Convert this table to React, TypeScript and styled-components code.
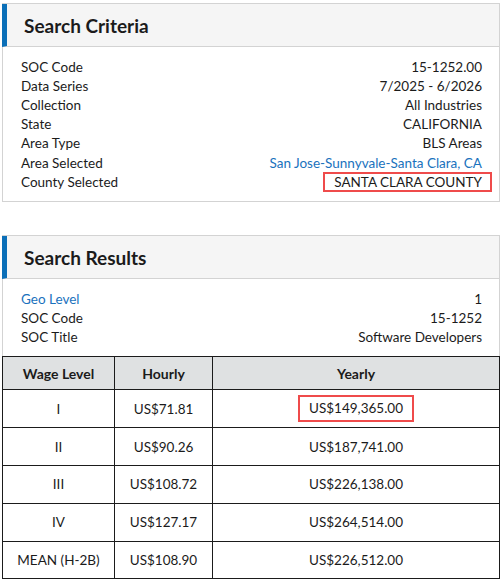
import React from "react";
import styled, { createGlobalStyle } from "styled-components";

const Global = createGlobalStyle`
  html, body { margin: 0; padding: 0; background: #fff; }
  body { font-family: "Source Sans Pro", Lato, "Liberation Sans", sans-serif; color: #1b1b1b; }
`;

const Page = styled.div`
  padding: 3px 4px 0 2px;
  display: flex;
  flex-direction: column;
  gap: 33px;
  width: 498px;
`;

const Panel = styled.section`
  border: 1px solid #d3d3d3;
  background: #fff;
`;

const PanelHeader = styled.div`
  height: 42px;
  display: flex;
  align-items: center;
  background: #f5f5f5;
  border-left: 5px solid #0b6fb8;
  border-bottom: 1px solid #d3d3d3;
  margin-left: -1px;
  padding-left: 17px;
`;

const Title = styled.h2`
  margin: 0;
  font-size: 19px;
  font-weight: 700;
  color: #1b1b1b;
`;

const Rows = styled.div<{ $pb: number }>`
  padding: 10px 17px ${(p) => p.$pb}px 18px;
  display: flex;
  flex-direction: column;
`;

const Row = styled.div`
  display: flex;
  justify-content: space-between;
  align-items: center;
  height: 19.2px;
  font-size: 13.5px;
`;

const Label = styled.span<{ $link?: boolean }>`
  color: ${(p) => (p.$link ? "#1a72bd" : "#1b1b1b")};
`;

const Value = styled.span<{ $link?: boolean; $boxed?: boolean }>`
  color: ${(p) => (p.$link ? "#1a72bd" : "#1b1b1b")};
  ${(p) =>
    p.$boxed
      ? `outline: 2px solid #ef4b4b; outline-offset: 0; padding: 0 8px 0 9px; margin-right: -8px; line-height: 16px;`
      : ""}
`;

const Table = styled.table`
  width: calc(100% + 2px);
  margin: 0 -1px -1px;
  border-collapse: collapse;
  font-size: 13.5px;
  table-layout: fixed;
`;

const Th = styled.th<{ $w?: number }>`
  background: #dfe1e2;
  border: 1.5px solid #1b1b1b;
  height: 32.5px;
  padding: 0;
  font-size: 14px;
  font-weight: 700;
  text-align: center;
  width: ${(p) => (p.$w ? `${p.$w}px` : "auto")};
`;

const Td = styled.td`
  border: 1.5px solid #1b1b1b;
  height: 36.8px;
  padding: 0;
  text-align: center;
`;

const Highlight = styled.span`
  display: inline-block;
  border: 2px solid #ef4b4b;
  padding: 1px 9px 2px;
  line-height: 20px;
`;

const criteria: [string, string, "link" | "boxed" | undefined][] = [
  ["SOC Code", "15-1252.00", undefined],
  ["Data Series", "7/2025 - 6/2026", undefined],
  ["Collection", "All Industries", undefined],
  ["State", "CALIFORNIA", undefined],
  ["Area Type", "BLS Areas", undefined],
  ["Area Selected", "San Jose-Sunnyvale-Santa Clara, CA", "link"],
  ["County Selected", "SANTA CLARA COUNTY", "boxed"],
];

const wages: [string, string, string][] = [
  ["I", "US$71.81", "US$149,365.00"],
  ["II", "US$90.26", "US$187,741.00"],
  ["III", "US$108.72", "US$226,138.00"],
  ["IV", "US$127.17", "US$264,514.00"],
  ["MEAN (H-2B)", "US$108.90", "US$226,512.00"],
];

export default function App() {
  return (
    <>
      <Global />
      <Page>
        <Panel>
          <PanelHeader>
            <Title>Search Criteria</Title>
          </PanelHeader>
          <Rows $pb={10}>
            {criteria.map(([k, v, t]) => (
              <Row key={k}>
                <Label>{k}</Label>
                <Value $link={t === "link"} $boxed={t === "boxed"}>
                  {v}
                </Value>
              </Row>
            ))}
          </Rows>
        </Panel>
        <Panel>
          <PanelHeader>
            <Title>Search Results</Title>
          </PanelHeader>
          <Rows $pb={9}>
            <Row>
              <Label $link>Geo Level</Label>
              <Value>1</Value>
            </Row>
            <Row>
              <Label>SOC Code</Label>
              <Value>15-1252</Value>
            </Row>
            <Row>
              <Label>SOC Title</Label>
              <Value>Software Developers</Value>
            </Row>
          </Rows>
          <Table>
            <thead>
              <tr>
                <Th $w={111}>Wage Level</Th>
                <Th $w={97}>Hourly</Th>
                <Th>Yearly</Th>
              </tr>
            </thead>
            <tbody>
              {wages.map(([l, h, y], i) => (
                <tr key={l}>
                  <Td>{l}</Td>
                  <Td>{h}</Td>
                  <Td>{i === 0 ? <Highlight>{y}</Highlight> : y}</Td>
                </tr>
              ))}
            </tbody>
          </Table>
        </Panel>
      </Page>
    </>
  );
}
